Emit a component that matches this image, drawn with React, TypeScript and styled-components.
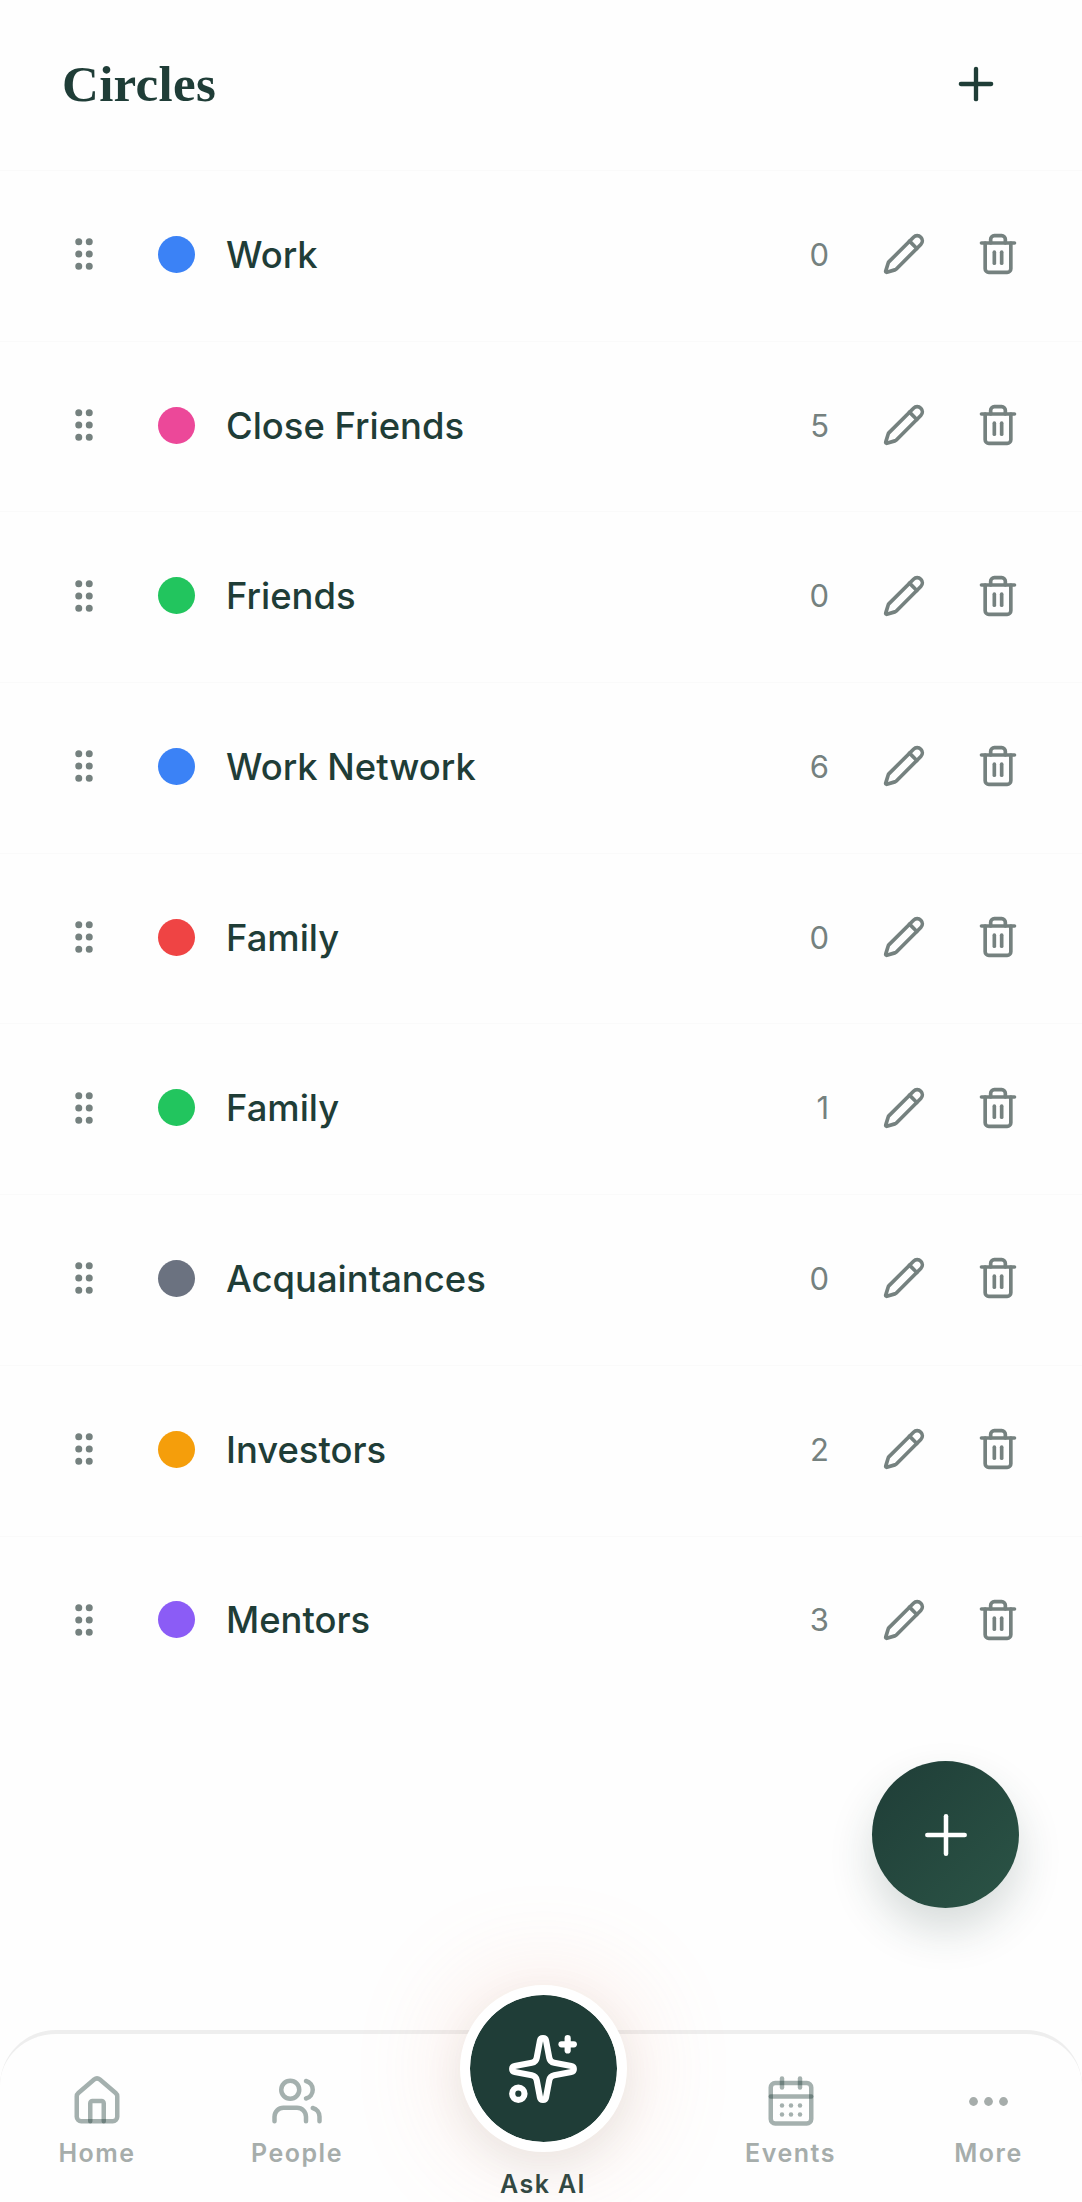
import styled, { createGlobalStyle } from "styled-components"
import { GripVertical, House, Pencil, Plus, Sparkles, Trash2, Users } from "lucide-react"

const DARK = "#1f3d37"
const MUTED = "#75817f"
const NAV_STROKE = "rgba(31, 61, 55, 0.4)"

type Circle = {
  name: string
  color: string
  count: number
}

const circles: Circle[] = [
  { name: "Work", color: "#3b82f6", count: 0 },
  { name: "Close Friends", color: "#ec4899", count: 5 },
  { name: "Friends", color: "#22c55e", count: 0 },
  { name: "Work Network", color: "#3b82f6", count: 6 },
  { name: "Family", color: "#ef4444", count: 0 },
  { name: "Family", color: "#22c55e", count: 1 },
  { name: "Acquaintances", color: "#6b7280", count: 0 },
  { name: "Investors", color: "#f59e0b", count: 2 },
  { name: "Mentors", color: "#8b5cf6", count: 3 },
]

const CalendarIcon = () => (
  <svg width="54" height="54" viewBox="0 0 24 24" fill="none" stroke={NAV_STROKE} strokeWidth="2" strokeLinecap="round">
    <path d="M8 2v4" />
    <path d="M16 2v4" />
    <rect x="3" y="4" width="18" height="18" rx="2" />
    <path d="M3 10h18" />
    <g fill="rgba(31, 61, 55, 0.4)" stroke="none">
      <circle cx="8" cy="14" r="1" />
      <circle cx="12" cy="14" r="1" />
      <circle cx="16" cy="14" r="1" />
      <circle cx="8" cy="18" r="1" />
      <circle cx="12" cy="18" r="1" />
      <circle cx="16" cy="18" r="1" />
    </g>
  </svg>
)

const MoreIcon = () => (
  <svg width="59" height="59" viewBox="0 0 59 59" fill="#a6adab">
    <circle cx="14.5" cy="30.5" r="4.4" />
    <circle cx="29.5" cy="30.5" r="4.4" />
    <circle cx="44.5" cy="30.5" r="4.4" />
  </svg>
)

const App = () => {
  return (
    <Page>
      <GlobalStyle />
      <Header>
        <Title>Circles</Title>
        <HeaderButton>
          <Plus size={52} strokeWidth={2} color={DARK} />
        </HeaderButton>
      </Header>

      <List>
        {circles.map((circle, index) => (
          <Row key={index}>
            <GripVertical size={42} color={MUTED} />
            <Dot $color={circle.color} />
            <Name>{circle.name}</Name>
            <Count>{circle.count}</Count>
            <EditButton>
              <Pencil size={44} strokeWidth={2} color={MUTED} />
            </EditButton>
            <DeleteButton>
              <Trash2 size={44} strokeWidth={2} color={MUTED} />
            </DeleteButton>
          </Row>
        ))}
      </List>

      <Fab>
        <Plus size={64} strokeWidth={1.7} color="#ffffff" />
      </Fab>

      <Nav>
        <NavItem>
          <NavIcon>
            <House size={54} strokeWidth={2} color={NAV_STROKE} />
          </NavIcon>
          <NavLabel>Home</NavLabel>
        </NavItem>
        <NavItem>
          <NavIcon>
            <Users size={54} strokeWidth={2} color={NAV_STROKE} />
          </NavIcon>
          <NavLabel>People</NavLabel>
        </NavItem>
        <AskItem>
          <AskButton>
            <Sparkles size={74} strokeWidth={2} color="#ffffff" />
          </AskButton>
          <AskLabel>Ask AI</AskLabel>
        </AskItem>
        <NavItem>
          <NavIcon>
            <CalendarIcon />
          </NavIcon>
          <NavLabel>Events</NavLabel>
        </NavItem>
        <NavItem>
          <NavIcon>
            <MoreIcon />
          </NavIcon>
          <NavLabel>More</NavLabel>
        </NavItem>
      </Nav>
    </Page>
  )
}

const GlobalStyle = createGlobalStyle`
  html, body {
    margin: 0;
    padding: 0;
    background: #ffffff;
  }
  * {
    box-sizing: border-box;
  }
`

const Page = styled.div`
  position: relative;
  display: flex;
  flex-direction: column;
  width: 1082px;
  height: 2202px;
  overflow: hidden;
  background: #fefefe;
  font-family: Inter, "Liberation Sans", sans-serif;
`

const Header = styled.header`
  display: flex;
  align-items: center;
  justify-content: space-between;
  height: 170px;
  padding: 0 80px 2px 62px;
`

const Title = styled.h1`
  margin: 0;
  font-family: "Liberation Serif", serif;
  font-size: 51px;
  font-weight: 700;
  letter-spacing: 0.3px;
  color: ${DARK};
`

const HeaderButton = styled.div`
  display: flex;
  width: 52px;
  height: 52px;
`

const List = styled.div`
  display: flex;
  flex-direction: column;
`

const Row = styled.div`
  display: flex;
  align-items: center;
  height: 170.7px;
  padding: 0 62px 3px 63px;
  border-top: 1px solid #fafafa;
`

const Dot = styled.span<{ $color: string }>`
  flex: none;
  width: 37px;
  height: 37px;
  margin: 0 31px 0 53px;
  border-radius: 50%;
  background: ${(props) => props.$color};
`

const Name = styled.span`
  flex: 1;
  padding-top: 1px;
  font-size: 36.4px;
  font-weight: 450;
  color: ${DARK};
`

const Count = styled.span`
  font-size: 31px;
  color: ${MUTED};
`

const EditButton = styled.div`
  display: flex;
  margin-left: 53px;
`

const DeleteButton = styled.div`
  display: flex;
  margin-left: 50px;
`

const Fab = styled.div`
  position: absolute;
  top: 1761px;
  right: 63px;
  display: flex;
  align-items: center;
  justify-content: center;
  width: 147px;
  height: 147px;
  border-radius: 50%;
  background: linear-gradient(135deg, #1f3d37, #2b5446);
  box-shadow: 0 22px 44px rgba(31, 61, 55, 0.18);
`

const Nav = styled.nav`
  display: grid;
  grid-template-columns: 194px 206px 286px 209px 187px;
  height: 172px;
  margin-top: auto;
  background: #fefefe;
  border-top: 4px solid #eeeeee;
  border-radius: 56px 56px 0 0;
`

const NavItem = styled.div`
  display: flex;
  flex-direction: column;
  align-items: center;
  padding-top: 37px;
`

const NavIcon = styled.div`
  display: flex;
  align-items: center;
  justify-content: center;
  height: 59px;
`

const NavLabel = styled.span`
  margin-top: 8px;
  font-size: 25px;
  line-height: 30px;
  font-weight: 600;
  letter-spacing: 1.5px;
  color: #a6adab;
`

const AskItem = styled.div`
  position: relative;
  display: flex;
  flex-direction: column;
  align-items: center;
  justify-content: flex-end;
  padding-bottom: 3px;
`

const AskButton = styled.div`
  position: absolute;
  top: -49px;
  left: 50%;
  display: flex;
  align-items: center;
  justify-content: center;
  width: 167px;
  height: 167px;
  margin-left: -83.5px;
  border: 10px solid #ffffff;
  border-radius: 50%;
  background: ${DARK};
  background-clip: padding-box;
  box-shadow: 0 0 110px rgba(235, 140, 110, 0.22), 0 14px 40px rgba(31, 61, 55, 0.08);
`

const AskLabel = styled.span`
  font-size: 25px;
  line-height: 30px;
  font-weight: 600;
  letter-spacing: 1.4px;
  color: #2d4843;
`

export default App
